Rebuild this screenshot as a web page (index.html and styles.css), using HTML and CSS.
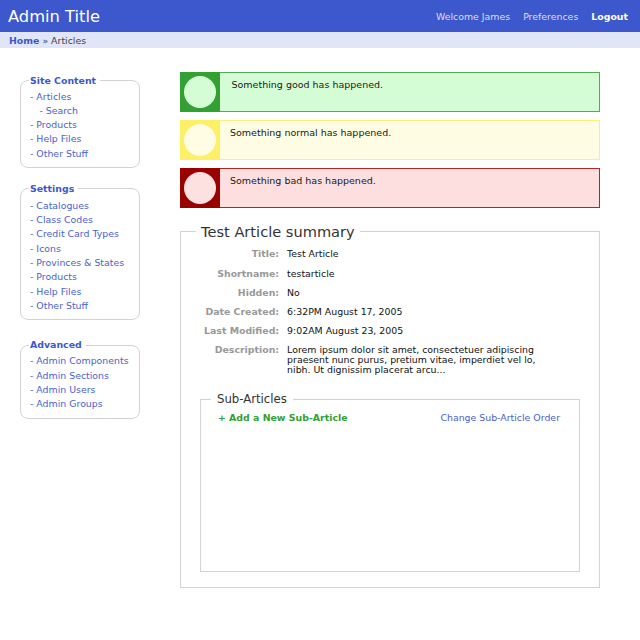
FILE: index.html
```html
<!DOCTYPE html>
<html lang="en">
<head>
<meta charset="utf-8">
<title>Admin Title</title>
<link rel="stylesheet" href="styles.css">
</head>
<body>
<header class="topbar">
  <div class="brand">Admin Title</div>
  <nav class="usernav">
    <span class="welcome">Welcome James</span>
    <a class="usernav-link" href="#">Preferences</a>
    <a class="usernav-link logout" href="#">Logout</a>
  </nav>
</header>
<div class="crumbs"><a class="crumb-home" href="#">Home</a> » Articles</div>
<div class="layout">
  <aside class="sidebar">
    <fieldset class="navbox">
      <legend>Site Content</legend>
      <ul class="navlist">
        <li><a href="#">- Articles</a></li>
        <li class="sub-item"><a href="#">- Search</a></li>
        <li><a href="#">- Products</a></li>
        <li><a href="#">- Help Files</a></li>
        <li><a href="#">- Other Stuff</a></li>
      </ul>
    </fieldset>
    <fieldset class="navbox navbox-settings">
      <legend>Settings</legend>
      <ul class="navlist">
        <li><a href="#">- Catalogues</a></li>
        <li><a href="#">- Class Codes</a></li>
        <li><a href="#">- Credit Card Types</a></li>
        <li><a href="#">- Icons</a></li>
        <li><a href="#">- Provinces &amp; States</a></li>
        <li><a href="#">- Products</a></li>
        <li><a href="#">- Help Files</a></li>
        <li><a href="#">- Other Stuff</a></li>
      </ul>
    </fieldset>
    <fieldset class="navbox navbox-advanced">
      <legend>Advanced</legend>
      <ul class="navlist">
        <li><a href="#">- Admin Components</a></li>
        <li><a href="#">- Admin Sections</a></li>
        <li><a href="#">- Admin Users</a></li>
        <li><a href="#">- Admin Groups</a></li>
      </ul>
    </fieldset>
  </aside>
  <main class="content">
    <div class="messages">
      <div class="msg msg-good">
        <div class="msg-icon"><span class="msg-dot"></span></div>
        <div class="msg-text">Something good has happened.</div>
      </div>
      <div class="msg msg-normal">
        <div class="msg-icon"><span class="msg-dot"></span></div>
        <div class="msg-text">Something normal has happened.</div>
      </div>
      <div class="msg msg-bad">
        <div class="msg-icon"><span class="msg-dot"></span></div>
        <div class="msg-text">Something bad has happened.</div>
      </div>
    </div>
    <fieldset class="summary">
      <legend>Test Article summary</legend>
      <table class="details">
        <tr><th>Title:</th><td>Test Article</td></tr>
        <tr><th>Shortname:</th><td>testarticle</td></tr>
        <tr><th>Hidden:</th><td>No</td></tr>
        <tr><th>Date Created:</th><td>6:32PM August 17, 2005</td></tr>
        <tr><th>Last Modified:</th><td>9:02AM August 23, 2005</td></tr>
        <tr><th>Description:</th><td>Lorem ipsum dolor sit amet, consectetuer adipiscing praesent nunc purus, pretium vitae, imperdiet vel lo, nibh. Ut dignissim placerat arcu...</td></tr>
      </table>
      <fieldset class="subbox">
        <legend>Sub-Articles</legend>
        <div class="subbox-body">
          <div class="subbox-actions">
            <a class="add-link" href="#">+ Add a New Sub-Article</a>
            <a class="order-link" href="#">Change Sub-Article Order</a>
          </div>
        </div>
      </fieldset>
    </fieldset>
  </main>
</div>
</body>
</html>
```
FILE: styles.css
```css
body {
  margin: 0;
  font-family: "DejaVu Sans", "Liberation Sans", sans-serif;
  font-size: 9.4px;
  color: #000;
  background: #fff;
}

a { text-decoration: none; }

.topbar {
  height: 32px;
  background: #3c58cc;
  display: flex;
  align-items: center;
  justify-content: space-between;
  padding: 0 12px 0 8px;
}

.brand {
  font-size: 16.3px;
  color: #fff;
  padding-top: 1px;
}

.usernav {
  display: flex;
  gap: 13px;
  color: #d9dffa;
  font-size: 9.4px;
  padding-top: 1px;
}

.usernav-link { color: #d9dffa; }
.usernav-link.logout { color: #fff; font-weight: bold; }

.crumbs {
  height: 16px;
  line-height: 17px;
  background: #e1e5f8;
  padding-left: 9px;
  color: #444;
}

.crumb-home {
  color: #3c58cc;
  font-weight: bold;
}

.layout {
  display: flex;
  gap: 40px;
  padding: 24px 40px 0 20px;
}

.sidebar {
  width: 120px;
  flex: none;
  padding-top: 2.5px;
}

.navbox {
  margin: 0;
  min-width: 0;
  border: 1px solid #d3d3d3;
  border-radius: 8px;
  padding: 3px 5px 5.5px 9px;
}

.navbox-settings { margin-top: 15px; padding-top: 4px; }
.navbox-advanced { margin-top: 19.5px; padding-top: 3px; padding-bottom: 6px; }

.navbox legend {
  color: #3c58cc;
  font-weight: bold;
  line-height: 12px;
  padding: 0 4px 0 1px;
  margin-left: -1px;
}

.navlist {
  list-style: none;
  margin: 0;
  padding: 0;
}

.navlist li {
  height: 14.33px;
  line-height: 14px;
}
.navlist li.sub-item { padding-left: 9.4px; }
.navlist a { color: #4a5fd0; }

.content {
  width: 420px;
  flex: none;
}

.messages {
  display: flex;
  flex-direction: column;
  gap: 8px;
}

.msg {
  display: flex;
  height: 40px;
  box-sizing: border-box;
  border: 1px solid;
}

.msg-icon {
  width: 40px;
  flex: none;
  margin: -1px 0 -1px -1px;
  display: flex;
  align-items: center;
  justify-content: center;
}

.msg-dot {
  width: 32px;
  height: 32px;
  border-radius: 50%;
}

.msg-text {
  padding: 6px 0 0 10px;
  line-height: 12px;
  font-size: 9.5px;
  color: #1a1a1a;
}

.msg-good { border-color: #52ad52; background: #d5fdd5; }
.msg-good .msg-icon { background: #33a033; }
.msg-good .msg-dot { background: #d5fdd5; }
.msg-good .msg-text { padding-left: 11.5px; }

.msg-normal { border-color: #fdf07a; background: #fefde3; }
.msg-normal .msg-icon { background: #fef066; }
.msg-normal .msg-dot { background: #fffde4; }

.msg-bad { border-color: #b52222; background: #fddfdf; }
.msg-bad .msg-icon { background: #990000; }
.msg-bad .msg-dot { background: #fde0e0; }

.summary {
  margin: 14.7px 0 0;
  min-width: 0;
  border: 1px solid #d3d3d3;
  padding: 4px 19px 15px 19px;
}

.summary > legend {
  font-size: 14.6px;
  line-height: 18px;
  color: #333;
  padding: 0 5px;
  margin-left: -4px;
}

.details {
  border-collapse: collapse;
  width: 360px;
}

.details th {
  width: 1%;
  text-align: right;
  font-weight: bold;
  color: #999;
  white-space: nowrap;
  vertical-align: top;
  padding: 4.7px 4px;
  line-height: 9.8px;
}

.details td {
  vertical-align: top;
  padding: 4.7px 4px;
  line-height: 9.8px;
  color: #111;
}

.subbox {
  margin: 12.8px 0 0;
  min-width: 0;
  border: 1px solid #d3d3d3;
  padding: 6px 19px 0 17px;
}

.subbox > legend {
  font-size: 11.7px;
  line-height: 14px;
  color: #333;
  padding: 0 6px;
  margin-left: -7px;
}

.subbox-body { height: 158.5px; }

.subbox-actions {
  display: flex;
  justify-content: space-between;
  line-height: 12px;
}

.add-link { color: #33a033; font-weight: bold; }
.order-link { color: #4a5fd0; }
```
